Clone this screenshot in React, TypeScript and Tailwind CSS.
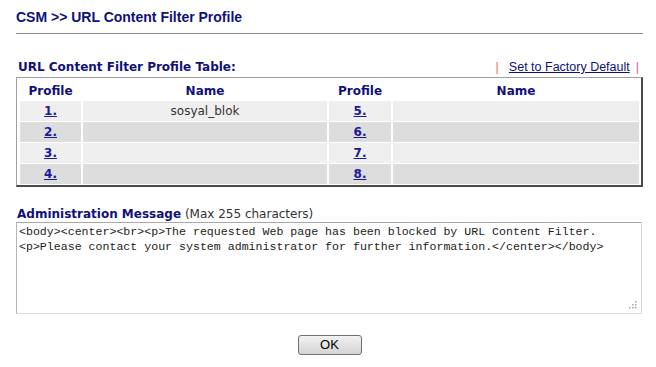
import React from 'react';

const rows = [
  { left: '1.', leftName: 'sosyal_blok', right: '5.', rightName: '' },
  { left: '2.', leftName: '', right: '6.', rightName: '' },
  { left: '3.', leftName: '', right: '7.', rightName: '' },
  { left: '4.', leftName: '', right: '8.', rightName: '' },
];

const message =
  '<body><center><br><p>The requested Web page has been blocked by URL Content Filter.\n<p>Please contact your system administrator for further information.</center></body>';

// dots of the textarea resize grip: [x, y]
const gripDots = [
  [6, 0],
  [3, 3],
  [6, 3],
  [0, 6],
  [3, 6],
  [6, 6],
];

export default function App() {
  return (
    <div className="w-[656px] h-[367px] bg-white pl-4 pr-[13px] font-['Liberation_Sans',Arial,sans-serif]">
      {/* Page title */}
      <h1 className="pt-[9px] text-[14px] leading-[17px] font-bold text-[#10107a]">
        CSM &gt;&gt; URL Content Filter Profile
      </h1>
      <div className="mt-[7px] h-px bg-[#8a8a8a]" />

      {/* Table heading */}
      <div className="mt-[26px] flex h-[14px] items-end justify-between pl-[2px] leading-[14px]">
        <span className="font-['DejaVu_Sans',sans-serif] text-[12px] font-bold text-[#10107a]">
          URL Content Filter Profile Table:
        </span>
        <span className="flex items-center pr-[4px] text-[12.5px]">
          <span className="text-[#f07050]">|</span>
          <a href="#" className="ml-[10px] text-[#10107a] underline">Set to Factory Default</a>
          <span className="ml-[6px] text-[#f0508a]">|</span>
        </span>
      </div>

      {/* Profile table */}
      <div className="mt-[3px] w-[627px] border-t border-l border-t-[#a0a0a0] border-l-[#a0a0a0] border-r-2 border-b-2 border-r-[#4a4a4a] border-b-[#4a4a4a] pl-[3px] pr-[2px] pb-px font-['DejaVu_Sans',sans-serif] text-[12px] leading-[14px]">
        <div className="grid grid-cols-[61px_244px_62px_246px] gap-x-[2px] gap-y-px">
          <div className="flex h-[22px] items-end justify-center pb-[2px] font-bold text-[#10107a]">Profile</div>
          <div className="flex h-[22px] items-end justify-center pb-[2px] font-bold text-[#10107a]">Name</div>
          <div className="flex h-[22px] items-end justify-center pb-[2px] font-bold text-[#10107a]">Profile</div>
          <div className="flex h-[22px] items-end justify-center pb-[2px] font-bold text-[#10107a]">Name</div>
          {rows.map((r, i) => {
            const bg = i % 2 === 0 ? 'bg-[#efefef]' : 'bg-[#dddddd]';
            return (
              <React.Fragment key={r.left}>
                <div className={`flex h-[20px] items-center justify-center ${bg}`}>
                  <a href="#" className="font-bold text-[#1a1a9a] underline">{r.left}</a>
                </div>
                <div className={`flex h-[20px] items-center justify-center text-[#333] ${bg}`}>{r.leftName}</div>
                <div className={`flex h-[20px] items-center justify-center ${bg}`}>
                  <a href="#" className="font-bold text-[#1a1a9a] underline">{r.right}</a>
                </div>
                <div className={`flex h-[20px] items-center justify-center text-[#333] ${bg}`}>{r.rightName}</div>
              </React.Fragment>
            );
          })}
        </div>
      </div>

      {/* Administration message */}
      <div className="mt-[20px] pl-px font-['DejaVu_Sans',sans-serif] text-[12px] leading-[14px] text-[#333]">
        <span className="font-bold text-[#10107a]">Administration Message</span> (Max 255 characters)
      </div>
      <div className="relative mt-px w-[626px]">
        <textarea
          className="block h-[92px] w-full resize-none border border-t-[#a9a9a9] border-l-[#b5b5b5] border-r-[#dcdcdc] border-b-[#dcdcdc] px-[2px] pt-px font-['Liberation_Mono','Courier_New',monospace] text-[11.6px] leading-[15px] text-[#222] outline-none"
          defaultValue={message}
        />
        <svg className="absolute right-[5px] bottom-[5px] h-[8px] w-[8px]" viewBox="0 0 8 8">
          {gripDots.map(([x, y]) => (
            <rect key={`${x}-${y}`} x={x} y={y} width="1.5" height="1.5" fill="#a8a8a8" />
          ))}
        </svg>
      </div>

      {/* Actions */}
      <div className="mt-[21px] flex justify-center">
        <button className="h-[20px] w-[64px] rounded-[3px] border border-[#707070] bg-gradient-to-b from-[#f2f2f2] to-[#d4d4d4] text-[13px] leading-[18px] text-black">
          OK
        </button>
      </div>
    </div>
  );
}
